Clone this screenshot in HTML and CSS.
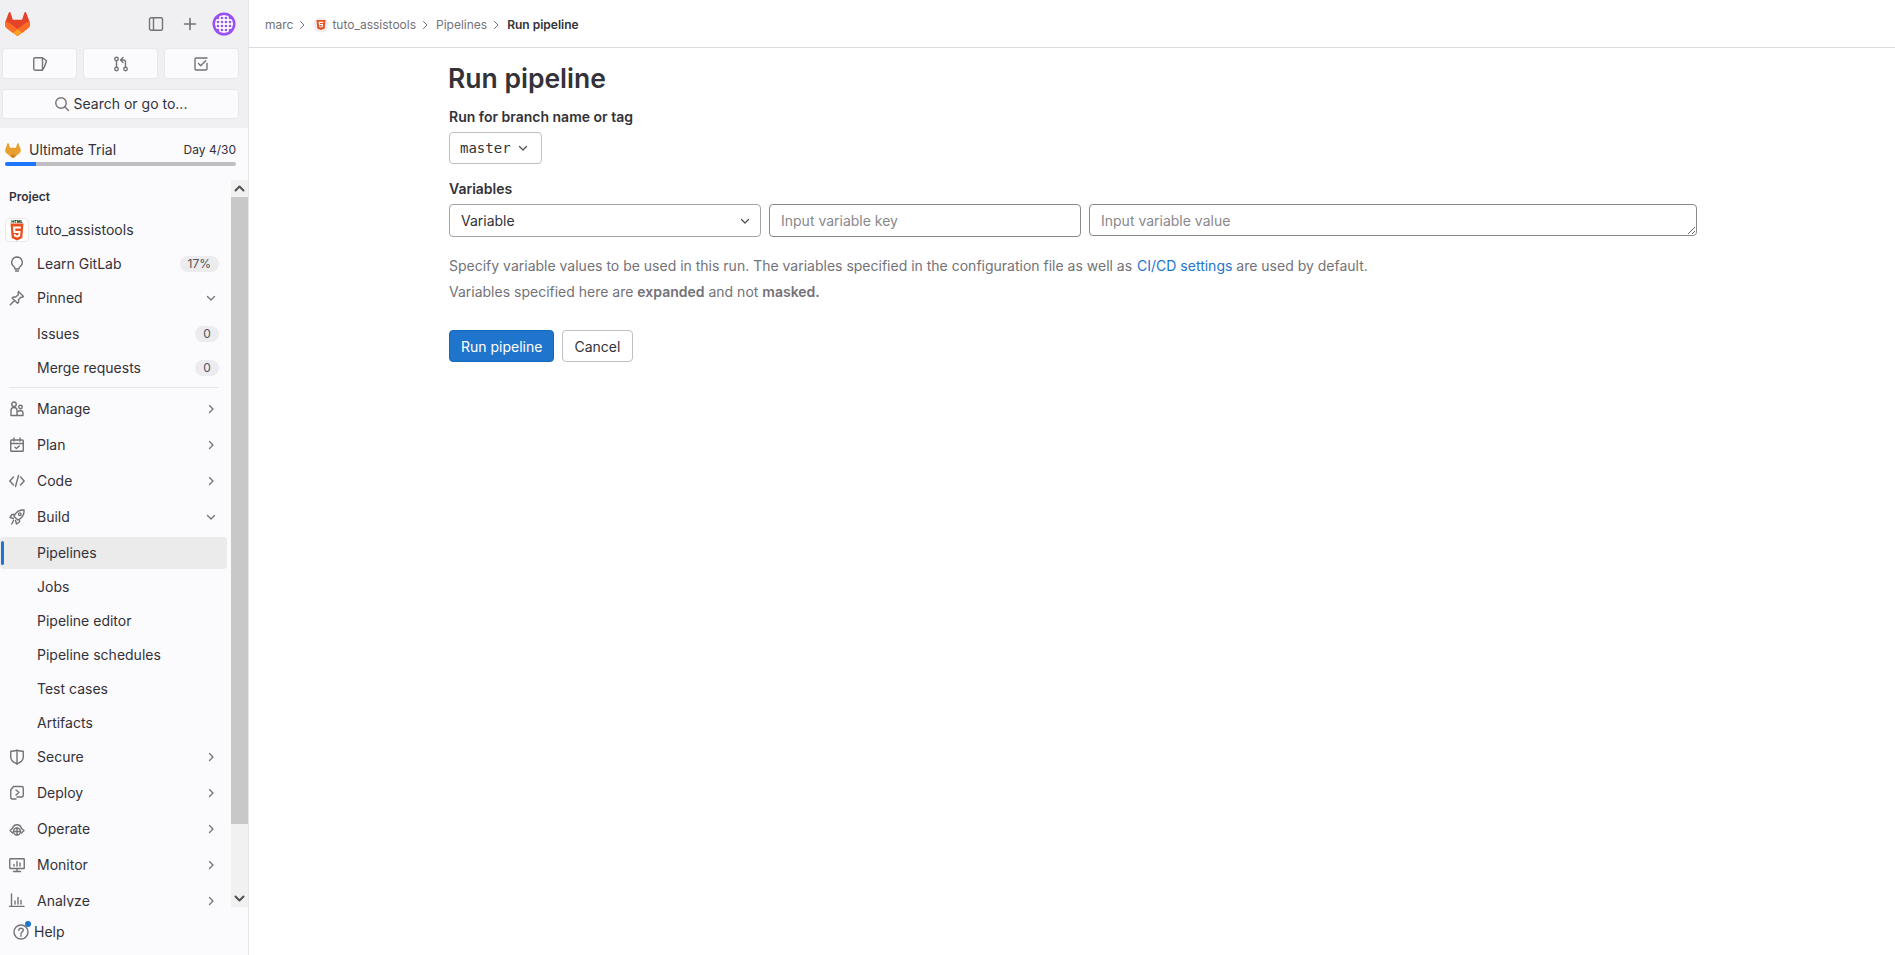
FILE: index.html
```html
<!DOCTYPE html>
<html lang="en">
<head>
<meta charset="utf-8">
<title>Run pipeline</title>
<link rel="stylesheet" href="styles.css">
</head>
<body>
<aside class="sidebar">
  <div class="top">
    <div class="top-row">
      <svg class="logo" viewBox="0 0 25 24"><path fill="#E24329" d="m24.507 9.5-.034-.09L21.082.562a.896.896 0 0 0-1.694.091l-2.29 7.01H7.825L5.535.653a.898.898 0 0 0-1.694-.09L.451 9.411.416 9.5a6.297 6.297 0 0 0 2.09 7.278l.012.01.03.022 5.16 3.867 2.56 1.935 1.554 1.176a1.051 1.051 0 0 0 1.268 0l1.555-1.176 2.56-1.935 5.197-3.89.014-.01A6.297 6.297 0 0 0 24.507 9.5Z"/><path fill="#FC6D26" d="m24.507 9.5-.034-.09a11.44 11.44 0 0 0-4.56 2.051l-7.447 5.632 4.742 3.584 5.197-3.89.014-.01A6.297 6.297 0 0 0 24.507 9.5Z"/><path fill="#FCA326" d="m7.707 20.677 2.56 1.935 1.555 1.176a1.051 1.051 0 0 0 1.268 0l1.555-1.176 2.56-1.935-4.743-3.584-4.755 3.584Z"/><path fill="#FC6D26" d="M5.01 11.461a11.43 11.43 0 0 0-4.56-2.05L.416 9.5a6.297 6.297 0 0 0 2.09 7.278l.012.01.03.022 5.16 3.867 4.745-3.584-7.444-5.632Z"/></svg>
      <span class="top-spacer"></span>
      <svg class="ico" viewBox="0 0 16 16"><rect x="1.500" y="1.750" width="13" height="12.500" rx="1.500"/><path d="M5.500 1.750v12.500"/></svg>
      <svg class="ico plus" viewBox="0 0 16 16"><path d="M8 2.500v11M2.500 8h11"/></svg>
      <svg class="avatar" viewBox="0 0 24 24"><defs><pattern id="dots" width="4" height="4" patternUnits="userSpaceOnUse"><rect width="4" height="4" fill="#fff"/><path d="M2 .4 3.600 2 2 3.600.4 2z" fill="#8f3ff0"/></pattern></defs><circle cx="12" cy="12" r="11.500" fill="#9a50f2"/><circle cx="12" cy="12" r="9" fill="url(#dots)"/></svg>
    </div>
    <div class="quick">
      <div class="quick-btn"><svg class="ico" viewBox="0 0 16 16"><path d="M10.500 1.750H3.200c-.8 0-1.450.6-1.450 1.400v9.700c0 .8.650 1.400 1.450 1.400h7.300zM10.500 1.750l4 3-2 6-2 3.500"/></svg></div>
      <div class="quick-btn"><svg class="ico" viewBox="0 0 16 16"><circle cx="3.500" cy="3" r="1.750"/><circle cx="3.500" cy="13" r="1.750"/><circle cx="12.500" cy="13" r="1.750"/><path d="M3.500 4.750v6.500M12.500 11.250V6a2 2 0 0 0-2-2H8M10 1.500 7.500 4 10 6.500"/></svg></div>
      <div class="quick-btn"><svg class="ico" viewBox="0 0 16 16"><path d="M14 7.500v5.200c0 .7-.5 1.300-1.200 1.300H3.200C2.500 14 2 13.400 2 12.700V3.300C2 2.600 2.500 2 3.200 2h10.800M5.500 7.500l2.200 2.200 5-5"/></svg></div>
    </div>
    <div class="search"><svg class="ico" viewBox="0 0 16 16"><circle cx="7" cy="7" r="5.250"/><path d="m10.800 10.800 3.700 3.700"/></svg><span>Search or go to...</span></div>
  </div>
  <div class="trial">
    <div class="trial-row">
      <svg class="trial-ico" viewBox="0 0 25 24"><path fill="#E8A02E" d="m24.507 9.5-.034-.09L21.082.562a.896.896 0 0 0-1.694.091l-2.29 7.01H7.825L5.535.653a.898.898 0 0 0-1.694-.09L.451 9.411.416 9.5a6.297 6.297 0 0 0 2.09 7.278l.012.01.03.022 5.16 3.867 2.56 1.935 1.554 1.176a1.051 1.051 0 0 0 1.268 0l1.555-1.176 2.56-1.935 5.197-3.89.014-.01A6.297 6.297 0 0 0 24.507 9.5Z"/><path fill="#D9821F" d="M12.460 17.090 7.707 20.677l2.560 1.935 1.555 1.176a1.051 1.051 0 0 0 1.268 0l1.555-1.176 2.560-1.935z"/></svg>
      <span class="trial-name">Ultimate Trial</span>
      <span class="trial-day">Day 4/30</span>
    </div>
    <div class="progress"><div class="progress-fill"></div></div>
  </div>
  <div class="nav-wrap">
    <nav class="nav">
      <div class="nav-title">Project</div>
      <a class="item sub"><span class="html-tile"><svg viewBox="0 0 20 22"><text x="10" y="3.800" class="html-word">HTML</text><path fill="#E8501F" d="M3.500 4.500h13l-1.200 14.500L10 21.500l-5.300-2.500z"/><path fill="#fff" d="M6 7.500h8l-.2 2H8.200l.2 2.500h5.200l-.5 5.300L10 18.500l-3-1.200-.2-2.400h1.800l.1 1.100 1.300.5 1.400-.5.200-2H6.500z"/></svg></span><span class="label">tuto_assistools</span></a>
      <a class="item sub"><svg class="ico" viewBox="0 0 16 16"><path d="M8 1a5.250 5.250 0 0 0-3.400 9.250c.9.800 1.400 1.400 1.400 2.250v.5h4v-.5c0-.85.5-1.450 1.400-2.250A5.250 5.250 0 0 0 8 1zM6.500 15h3"/></svg><span class="label">Learn GitLab</span><span class="badge">17%</span></a>
      <a class="item section"><svg class="ico" viewBox="0 0 16 16"><path d="M9.500 1.500l5 5-1.200.9-1.500-.2-2.300 2.600.1 2.400-1.100 1.100-5.300-5.300 1.100-1.100 2.400.1 2.600-2.300-.2-1.500zM4.800 11.200 1.300 14.700"/></svg><span class="label">Pinned</span><svg class="chev" viewBox="0 0 16 16"><path d="m4.500 6.500 3.500 3.500 3.500-3.500"/></svg></a>
      <a class="item sub"><span class="ico-gap"></span><span class="label">Issues</span><span class="badge">0</span></a>
      <a class="item sub"><span class="ico-gap"></span><span class="label">Merge requests</span><span class="badge">0</span></a>
      <hr class="rule">
      <a class="item section"><svg class="ico" viewBox="0 0 16 16"><circle cx="5" cy="3.300" r="2.250"/><circle cx="11.500" cy="6" r="1.750"/><path d="M2 14.500V9.500a3 3 0 0 1 6 0v5zM8 14.500h6v-2.300a2.600 2.600 0 0 0-2.500-2.700c-.8 0-1.700.3-2.200.9"/></svg><span class="label">Manage</span><svg class="chev" viewBox="0 0 16 16"><path d="m6.500 4.500 3.500 3.500-3.500 3.500"/></svg></a>
      <a class="item section"><svg class="ico" viewBox="0 0 16 16"><rect x="1.750" y="3" width="12.500" height="11.250" rx=".8"/><path d="M1.750 6.500h12.500M5 1v3M11 1v3M6 10.200l1.500 1.300 2.800-2.500"/></svg><span class="label">Plan</span><svg class="chev" viewBox="0 0 16 16"><path d="m6.500 4.500 3.500 3.500-3.500 3.500"/></svg></a>
      <a class="item section"><svg class="ico" viewBox="0 0 16 16"><path d="M4.500 4 .8 8l3.700 4M11.500 4l3.700 4-3.700 4M9.500 2.500l-3 11"/></svg><span class="label">Code</span><svg class="chev" viewBox="0 0 16 16"><path d="m6.500 4.500 3.500 3.500-3.500 3.500"/></svg></a>
      <a class="item section"><svg class="ico" viewBox="0 0 16 16"><path d="M15 1c-3.800-.3-7 1.300-9 4.400L5 7.200 8.800 11l1.800-1c3.100-2 4.700-5.200 4.400-9zM5.500 5.500H3L1 8.500l3.500 1M10.500 10.500V13l-3 2-1-3.500M4.500 11.500 2.800 15"/><circle cx="10.800" cy="5.200" r="1.300"/></svg><span class="label">Build</span><svg class="chev" viewBox="0 0 16 16"><path d="m4.500 6.500 3.500 3.500 3.500-3.500"/></svg></a>
      <a class="item sub active"><span class="ico-gap"></span><span class="label">Pipelines</span></a>
      <a class="item sub"><span class="ico-gap"></span><span class="label">Jobs</span></a>
      <a class="item sub"><span class="ico-gap"></span><span class="label">Pipeline editor</span></a>
      <a class="item sub"><span class="ico-gap"></span><span class="label">Pipeline schedules</span></a>
      <a class="item sub"><span class="ico-gap"></span><span class="label">Test cases</span></a>
      <a class="item sub"><span class="ico-gap"></span><span class="label">Artifacts</span></a>
      <a class="item section"><svg class="ico" viewBox="0 0 16 16"><path d="M8 1.250c2 .8 4 1 6.250 1V8c0 3.200-2.500 5.500-6.250 6.750C4.250 13.500 1.750 11.200 1.750 8V2.250C4 2.250 6 2.050 8 1.250zM8 1.250V15.500"/></svg><span class="label">Secure</span><svg class="chev" viewBox="0 0 16 16"><path d="m6.500 4.500 3.500 3.500-3.500 3.500"/></svg></a>
      <a class="item section"><svg class="ico" viewBox="0 0 16 16"><path d="M4.500 1.500h8.250c.8 0 1.500.7 1.500 1.500v7.500c0 .8-.7 1.500-1.500 1.500H8M4.500 1.500 1.750 5v7.500c0 .8.700 1.500 1.500 1.500H7M7 5l3 2.500-3 2.500"/></svg><span class="label">Deploy</span><svg class="chev" viewBox="0 0 16 16"><path d="m6.500 4.500 3.500 3.500-3.500 3.500"/></svg></a>
      <a class="item section"><svg class="ico" viewBox="0 0 16 16"><path d="M3.500 12 1 9.500l2.700-2.300a4.400 4.400 0 0 1 8.600 0L15 9.500 12.500 12"/><circle cx="8" cy="10.500" r="3.500"/><path d="M8 7v7M4.500 10.500h7"/></svg><span class="label">Operate</span><svg class="chev" viewBox="0 0 16 16"><path d="m6.500 4.500 3.500 3.500-3.500 3.500"/></svg></a>
      <a class="item section"><svg class="ico" viewBox="0 0 16 16"><rect x=".75" y="1.750" width="14.500" height="9.750" rx=".6"/><path d="M8 11.500v3M4.500 14.500h7M5 9V7.500M8 9V4.500M11 9V6"/></svg><span class="label">Monitor</span><svg class="chev" viewBox="0 0 16 16"><path d="m6.500 4.500 3.500 3.500-3.500 3.500"/></svg></a>
      <a class="item section"><svg class="ico" viewBox="0 0 16 16"><path d="M2.500 1v14.500M.5 13.500H15M6 11V8M9 11V4.500M12 11V7.500"/></svg><span class="label">Analyze</span><svg class="chev" viewBox="0 0 16 16"><path d="m6.500 4.500 3.500 3.500-3.500 3.500"/></svg></a>
    </nav>
    <div class="scrollbar">
      <div class="sb-btn"><svg viewBox="0 0 17 17"><path d="m4.500 10.500 4-4 4 4"/></svg></div>
      <div class="sb-thumb"></div>
      <div class="sb-track"></div>
      <div class="sb-btn"><svg viewBox="0 0 17 17"><path d="m4.500 6.500 4 4 4-4"/></svg></div>
    </div>
  </div>
  <div class="help">
    <span class="help-ico"><svg class="ico" viewBox="0 0 16 16"><circle cx="8" cy="8" r="7"/><path d="M5.800 6.200C5.900 5 6.800 4.300 8 4.300c1.300 0 2.200.8 2.200 1.900 0 1.800-2.200 1.700-2.200 3.500M8 11v1.200"/></svg><span class="help-dot"></span></span>
    <span>Help</span>
  </div>
</aside>
<main class="main">
  <header class="crumbs">
    <a class="crumb">marc</a>
    <svg class="crumb-sep" viewBox="0 0 16 16"><path d="m6.500 4.500 3.500 3.500-3.500 3.500"/></svg>
    <svg class="crumb-html" viewBox="0 0 16 16"><circle cx="8" cy="8" r="7.500" fill="#efeef0"/><path fill="#E8501F" d="M3.500 3h9l-.8 8.500L8 13l-3.700-1.500z"/><path fill="#fff" d="M5.600 4.800h4.800l-.1 1.100H6.900l.1 1.200h3.100l-.3 2.900L8 10.600l-1.800-.6-.1-1.400h1l.1.600.8.300.8-.3.1-1.100H5.900z"/></svg>
    <a class="crumb">tuto_assistools</a>
    <svg class="crumb-sep" viewBox="0 0 16 16"><path d="m6.500 4.500 3.500 3.500-3.500 3.500"/></svg>
    <a class="crumb">Pipelines</a>
    <svg class="crumb-sep" viewBox="0 0 16 16"><path d="m6.500 4.500 3.500 3.500-3.500 3.500"/></svg>
    <a class="crumb current">Run pipeline</a>
  </header>
  <div class="page">
    <h1 class="title">Run pipeline</h1>
    <div class="field-label first">Run for branch name or tag</div>
    <div class="branch"><span class="mono">master</span><svg class="chev-dark" viewBox="0 0 16 16"><path d="m4.500 6.500 3.500 3.500 3.500-3.500"/></svg></div>
    <div class="field-label second">Variables</div>
    <div class="var-row">
      <div class="var-type"><span>Variable</span><svg class="chev-dark" viewBox="0 0 16 16"><path d="m4.500 6.500 3.500 3.500 3.500-3.500"/></svg></div>
      <input class="var-key" type="text" placeholder="Input variable key">
      <textarea class="var-value" rows="1" placeholder="Input variable value"></textarea>
    </div>
    <p class="help-text one">Specify variable values to be used in this run. The variables specified in the configuration file as well as <a class="link">CI/CD settings</a> are used by default.</p>
    <p class="help-text two">Variables specified here are <strong>expanded</strong> and not <strong>masked.</strong></p>
    <div class="actions">
      <button class="btn primary" type="button">Run pipeline</button>
      <button class="btn" type="button">Cancel</button>
    </div>
  </div>
</main>
</body>
</html>
```
FILE: styles.css
```css
* { box-sizing: border-box; }
html, body { height: 100%; }
body {
  margin: 0;
  display: flex;
  height: 100vh;
  overflow: hidden;
  background: #fff;
  color: #333238;
  font-family: Inter, "Noto Sans", sans-serif;
  font-size: 14px;
  line-height: 20px;
}
svg { display: block; flex: none; }
.ico, .chev, .chev-dark, .crumb-sep, .sb-btn svg {
  fill: none;
  stroke-linecap: round;
  stroke-linejoin: round;
}
.ico { width: 16px; height: 16px; stroke: #737278; stroke-width: 1.4; }
.chev { width: 16px; height: 16px; stroke: #737278; stroke-width: 1.3; }
.chev-dark { width: 16px; height: 16px; stroke: #535158; stroke-width: 1.3; }

.sidebar {
  width: 249px;
  flex: none;
  display: flex;
  flex-direction: column;
  background: #fbfafd;
  border-right: 1px solid #e5e5e8;
}
.top {
  height: 128px;
  flex: none;
  background: #f0f0f3;
  padding: 0 9px 0 2px;
}
.top-row {
  height: 48px;
  display: flex;
  align-items: center;
  padding-left: 3px;
}
.logo { width: 25px; height: 24px; }
.top-spacer { flex: 1; }
.plus { margin-left: 18px; stroke-width: 1.6; }
.avatar { width: 24px; height: 24px; margin-left: 14px; margin-right: 3px; }
.quick { display: flex; gap: 6px; }
.quick-btn, .search {
  background: #fbfafd;
  border-radius: 4px;
  box-shadow: 0 0 0 1px #e8e8eb inset;
  display: flex;
  align-items: center;
  justify-content: center;
}
.quick-btn { width: 76px; height: 31px; }
.quick-btn:nth-child(2) { width: 75px; }
.search { width: 237px; height: 30px; margin-top: 10px; gap: 4px; }
.trial { height: 52px; flex: none; padding: 12px 12px 0 5px; }
.trial-row { display: flex; align-items: center; height: 20px; }
.trial-ico { width: 16px; height: 15px; }
.trial-name { margin-left: 8px; flex: 1; }
.trial-day { font-size: 12px; }
.progress { height: 4px; margin-top: 2px; border-radius: 2px; background: #bfbfc3; overflow: hidden; }
.progress-fill { width: 31px; height: 100%; background: #1f75fe; }

.nav-wrap { flex: 1; min-height: 0; display: flex; }
.nav { flex: 1; min-width: 0; overflow: hidden; padding-right: 4px; }
.nav-title {
  height: 34px;
  padding: 8px 0 0 9px;
  font-size: 12px;
  font-weight: 600;
  line-height: 18px;
}
.item {
  display: flex;
  align-items: center;
  height: 32px;
  padding: 0 8px 0 9px;
  border-radius: 4px;
  position: relative;
}
.sub { margin-bottom: 2px; }
.section { margin-bottom: 4px; }
.item .ico { margin-right: 12px; }
.ico-gap { width: 28px; flex: none; }
.label { flex: 1; white-space: nowrap; }
.badge {
  background: #ececef;
  color: #535158;
  border-radius: 8px;
  font-size: 12px;
  line-height: 16px;
  min-width: 24px;
  text-align: center;
  padding: 0 8px;
  margin-left: 8px;
}
.html-tile {
  width: 24px;
  height: 24px;
  margin: 0 7px 0 -4px;
  background: #fff;
  border: 1px solid #e8e8eb;
  border-radius: 4px;
  display: flex;
  align-items: center;
  justify-content: center;
  flex: none;
}
.html-tile svg { width: 20px; height: 22px; }
.html-word { font-size: 4px; font-weight: 800; fill: #222; text-anchor: middle; }
.rule { margin: 3px 9px 5px 9px; height: 1px; border: 0; background: #e5e5e8; }
.active { background: #ebebec; }
.active::before {
  content: "";
  position: absolute;
  left: 1px;
  top: 4px;
  bottom: 4px;
  width: 3px;
  border-radius: 2px;
  background: #1f75cb;
}
.scrollbar {
  width: 17px;
  flex: none;
  display: flex;
  flex-direction: column;
  background: #f1f1f1;
}
.sb-btn { height: 17px; flex: none; }
.sb-btn svg { width: 17px; height: 17px; stroke: #505050; stroke-width: 2; }
.sb-thumb { height: 627px; flex: none; background: #c8c8c8; }
.sb-track { flex: 1; }
.help {
  height: 48px;
  flex: none;
  display: flex;
  align-items: center;
  padding: 1px 0 0 13px;
  gap: 5px;
}
.help-ico { position: relative; display: block; }
.help-dot {
  position: absolute;
  right: -2px;
  top: -3px;
  width: 6px;
  height: 6px;
  border-radius: 50%;
  background: #1f75cb;
}

.main { flex: 1; min-width: 0; }
.crumbs {
  height: 48px;
  display: flex;
  align-items: center;
  padding: 2px 0 0 16px;
  border-bottom: 1px solid #dcdcde;
  font-size: 12px;
  color: #737278;
}
.crumb-sep { width: 16px; height: 16px; stroke: #737278; stroke-width: 1; margin: 0 3px 0 1px; }
.crumb-html { width: 16px; height: 16px; margin-right: 3px; }
.crumb.current { color: #333238; font-weight: 600; }

.page { width: 1280px; margin: 0 auto; padding: 0 15px 0 17px; }
.title {
  margin: 0 0 0 -1px;
  padding-top: 12px;
  font-size: 26.500px;
  line-height: 36px;
  font-weight: 600;
}
.field-label { font-weight: 600; }
.field-label.first { margin-top: 11px; }
.field-label.second { margin-top: 15px; }
.branch {
  display: inline-flex;
  align-items: center;
  height: 32px;
  margin-top: 5px;
  padding: 0 10px 0 11px;
  gap: 4px;
  border: 1px solid #bfbfc3;
  border-radius: 4px;
  vertical-align: top;
}
.mono { font-family: "DejaVu Sans Mono", "Liberation Mono", monospace; font-size: 14px; margin-left: -1px; }
.var-row { display: flex; align-items: flex-start; gap: 8px; margin-top: 5px; }
.var-type, .var-key, .var-value {
  border: 1px solid #89888d;
  border-radius: 4px;
  font: inherit;
  color: inherit;
  background: #fff;
  margin: 0;
  outline: none;
}
.var-type {
  width: 312px;
  height: 33px;
  flex: none;
  display: flex;
  align-items: center;
  justify-content: space-between;
  padding: 0 7px 0 11px;
  border-color: #a4a3a8;
}
.var-key { width: 312px; height: 33px; flex: none; padding: 0 11px; }
.var-value { flex: 1; min-width: 0; height: 32px; padding: 6px 11px 4px; display: block; line-height: 20px; }
.var-key::placeholder, .var-value::placeholder { color: #89888d; opacity: 1; }
.help-text { margin: 0; color: #737278; }
.help-text.one { margin-top: 19px; }
.help-text.two { margin-top: 6px; }
.help-text strong { font-weight: 600; }
.link { color: #1f75cb; margin-left: 1px; }
.actions { display: flex; gap: 8px; margin-top: 28px; }
.btn {
  height: 32px;
  padding: 1px 11px 0;
  border: 1px solid #bfbfc3;
  border-radius: 4px;
  background: #fff;
  color: #333238;
  font: inherit;
}
.btn + .btn { padding: 1px 12px 0 11px; }
.btn.primary { background: #1f75cb; border-color: #1068bf; color: #fff; }
```
